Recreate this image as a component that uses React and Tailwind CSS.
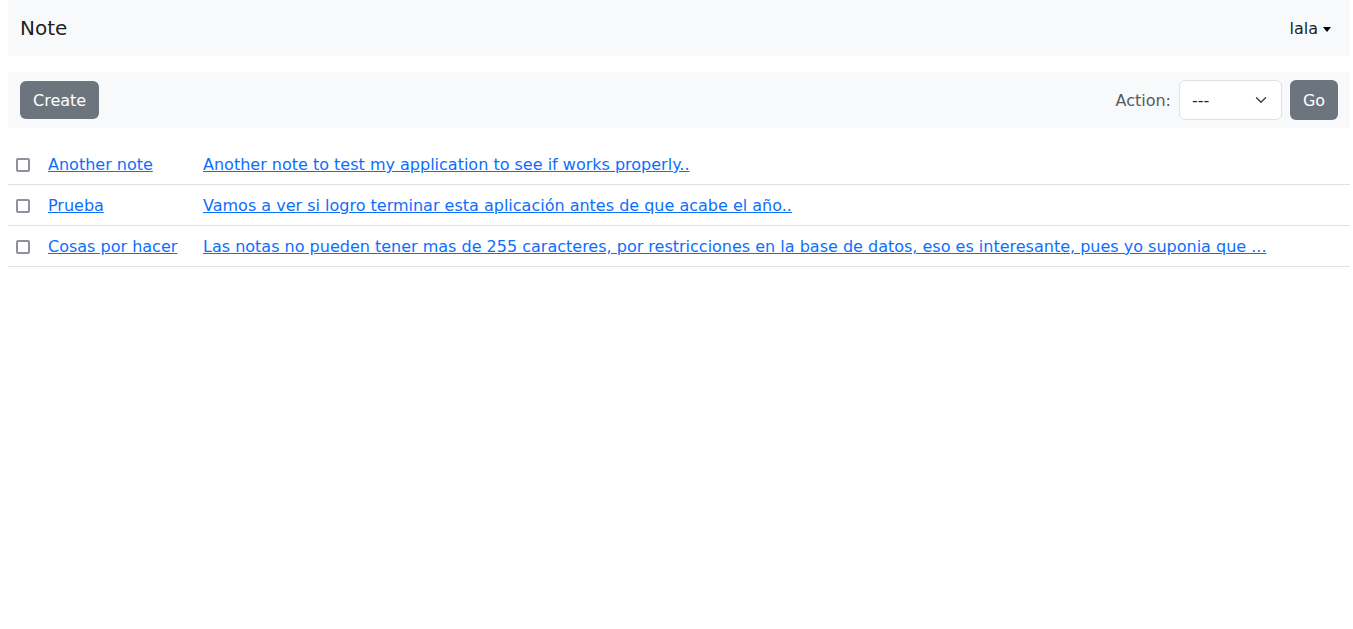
import React from "react";

const notes = [
  {
    title: "Another note",
    body: "Another note to test my application to see if works properly..",
  },
  {
    title: "Prueba",
    body: "Vamos a ver si logro terminar esta aplicación antes de que acabe el año..",
  },
  {
    title: "Cosas por hacer",
    body: "Las notas no pueden tener mas de 255 caracteres, por restricciones en la base de datos, eso es interesante, pues yo suponia que ...",
  },
];

export default function App() {
  return (
    <div className="min-h-screen bg-white pl-2 pr-[3px] text-[16px] text-[#212529] font-['DejaVu_Sans',sans-serif]">
      <nav className="flex h-[56px] items-center justify-between bg-[#f8f9fa] px-3">
        <a href="#" className="text-[20px] text-black/90">
          Note
        </a>
        <button type="button" className="flex items-center gap-[5px] pr-[7px] pt-[1px] text-black/90">
          <span>lala</span>
          <span className="mt-[1px] h-0 w-0 border-x-[4px] border-t-[5px] border-x-transparent border-t-black" />
        </button>
      </nav>

      <div className="mt-4 flex h-[56px] items-center justify-between bg-[#f8f9fa] px-3">
        <button
          type="button"
          className="h-[38px] rounded-[6px] bg-[#6c757d] px-[13px] pt-[1px] text-white"
        >
          Create
        </button>
        <div className="flex items-center">
          <span className="mr-2 pt-[1px] text-[#545b62]">Action:</span>
          <div className="flex h-[40px] w-[103px] items-center justify-between rounded-[6px] border border-[#dee2e6] bg-white pl-[12px] pr-[14px]">
            <span className="pt-[1px]">---</span>
            <svg width="12" height="12" viewBox="0 0 16 16" fill="none">
              <path
                d="M2 5l6 6 6-6"
                stroke="#343a40"
                strokeWidth="1.7"
                strokeLinecap="round"
                strokeLinejoin="round"
              />
            </svg>
          </div>
          <button
            type="button"
            className="ml-2 h-[40px] w-[48px] rounded-[6px] bg-[#6c757d] pt-[1px] text-white"
          >
            Go
          </button>
        </div>
      </div>

      <table className="mt-4 w-full border-collapse">
        <tbody>
          {notes.map((n) => (
            <tr key={n.title} className="border-b border-[#dee2e6]">
              <td className="w-[32px] pt-[9px] pb-[7px] pl-2 pr-0 align-middle">
                <span className="block h-[14px] w-[14px] rounded-[2px] border-2 border-[#8f8f9d] bg-white" />
              </td>
              <td className="w-[155px] px-2 pt-[9px] pb-[7px] leading-6">
                <a href="#" className="text-[#0d6efd] underline">
                  {n.title}
                </a>
              </td>
              <td className="px-2 pt-[9px] pb-[7px] leading-6">
                <a href="#" className="text-[#0d6efd] underline">
                  {n.body}
                </a>
              </td>
            </tr>
          ))}
        </tbody>
      </table>
    </div>
  );
}
